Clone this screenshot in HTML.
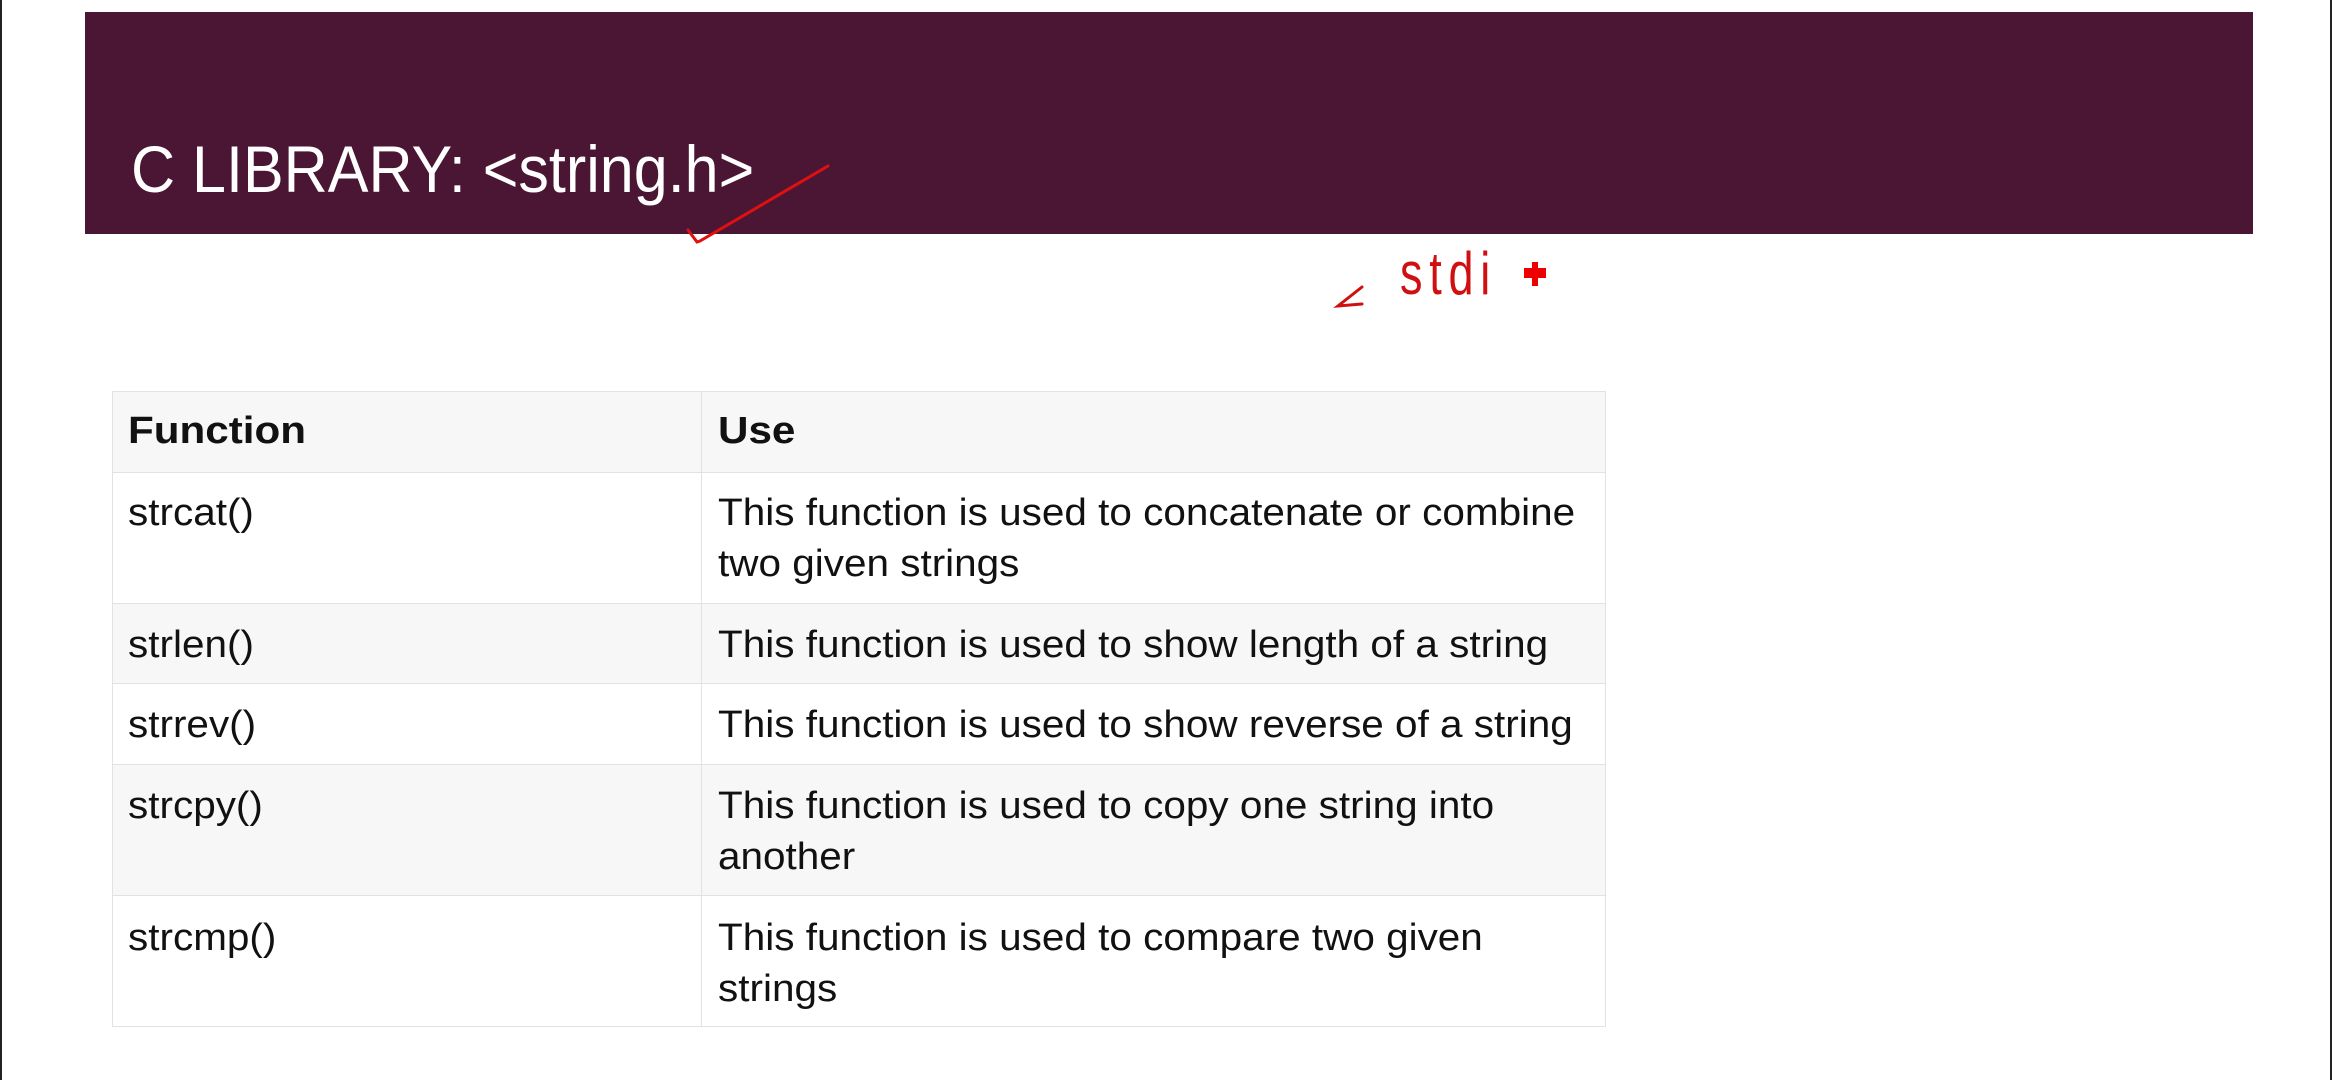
<!DOCTYPE html>
<html><head><meta charset="utf-8"><style>
html,body{margin:0;padding:0;}
body{width:2340px;height:1080px;position:relative;background:#fff;overflow:hidden;font-family:"Liberation Sans",sans-serif;}
.frameL{position:absolute;left:0;top:0;width:2px;height:1080px;background:#222;}
.frameR{position:absolute;left:2330px;top:0;width:2px;height:1080px;background:#222;}
.hdr{position:absolute;left:85px;top:12px;width:2168px;height:222px;background:#4b1534;}
.title{position:absolute;left:131px;top:129px;font-size:66px;color:#fff;white-space:nowrap;transform:scaleX(0.925);transform-origin:left top;line-height:80px;}
.cell{position:absolute;box-sizing:border-box;border:1px solid #e2e2e2;}
.t{position:absolute;font-size:38px;color:#111;white-space:nowrap;transform:scaleX(1.065);transform-origin:left top;line-height:40px;}
.b{font-weight:bold;transform:scaleX(1.11);}
</style></head><body>
<div class="frameL"></div><div class="frameR"></div>
<div class="hdr"></div>
<div class="title">C LIBRARY: &lt;string.h&gt;</div>

<div class="cell" style="left:112px;top:391px;width:590px;height:82px;background:#f7f7f7"></div>
<div class="cell" style="left:701px;top:391px;width:905px;height:82px;background:#f7f7f7"></div>
<div class="cell" style="left:112px;top:472px;width:590px;height:132px;background:#fff"></div>
<div class="cell" style="left:701px;top:472px;width:905px;height:132px;background:#fff"></div>
<div class="cell" style="left:112px;top:603px;width:590px;height:81px;background:#f7f7f7"></div>
<div class="cell" style="left:701px;top:603px;width:905px;height:81px;background:#f7f7f7"></div>
<div class="cell" style="left:112px;top:683px;width:590px;height:82px;background:#fff"></div>
<div class="cell" style="left:701px;top:683px;width:905px;height:82px;background:#fff"></div>
<div class="cell" style="left:112px;top:764px;width:590px;height:132px;background:#f7f7f7"></div>
<div class="cell" style="left:701px;top:764px;width:905px;height:132px;background:#f7f7f7"></div>
<div class="cell" style="left:112px;top:895px;width:590px;height:132px;background:#fff"></div>
<div class="cell" style="left:701px;top:895px;width:905px;height:132px;background:#fff"></div>

<div class="t b" style="left:128px;top:411px">Function</div>
<div class="t b" style="left:718px;top:411px">Use</div>

<div class="t" style="left:128px;top:493px">strcat()</div>
<div class="t" style="left:718px;top:493px">This function is used to concatenate or combine</div>
<div class="t" style="left:718px;top:544px">two given strings</div>

<div class="t" style="left:128px;top:625px">strlen()</div>
<div class="t" style="left:718px;top:625px">This function is used to show length of a string</div>

<div class="t" style="left:128px;top:705px">strrev()</div>
<div class="t" style="left:718px;top:705px">This function is used to show reverse of a string</div>

<div class="t" style="left:128px;top:786px">strcpy()</div>
<div class="t" style="left:718px;top:786px">This function is used to copy one string into</div>
<div class="t" style="left:718px;top:837px">another</div>

<div class="t" style="left:128px;top:918px">strcmp()</div>
<div class="t" style="left:718px;top:918px">This function is used to compare two given</div>
<div class="t" style="left:718px;top:969px">strings</div>

<svg style="position:absolute;left:0;top:0" width="2340" height="1080">
<path d="M688 230 L697 242 L700 241 L828 166" stroke="#e01010" stroke-width="3" fill="none" stroke-linecap="round"/>
<path d="M1362 287 L1338 306 L1362 304" stroke="#d01010" stroke-width="3" fill="none" stroke-linecap="round"/>
<text x="1400" y="294" font-family="Liberation Sans, sans-serif" font-size="60" fill="#d01010" letter-spacing="9" transform="translate(1400 294) scale(0.75 1) translate(-1400 -294)">stdi</text>
<path d="M1524 268h8v-6h6v6h8v10h-8v8h-6v-8h-8z" fill="#ee0000"/>
</svg>
</body></html>
